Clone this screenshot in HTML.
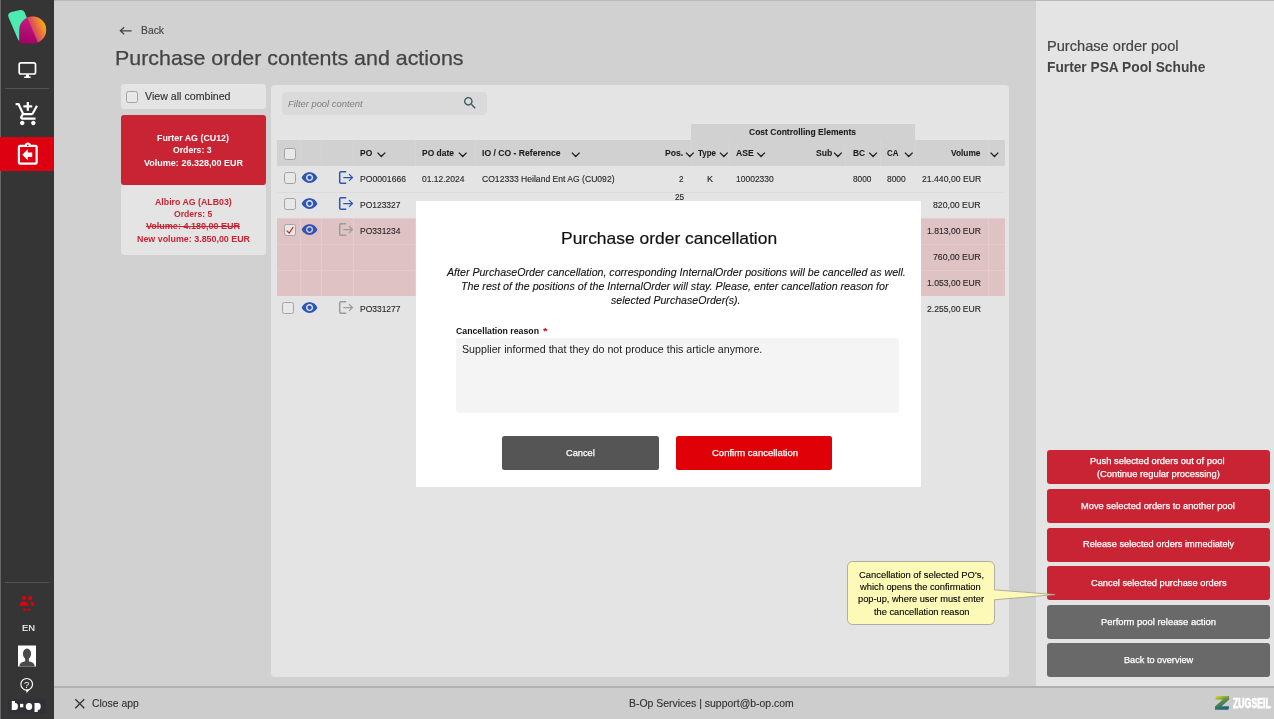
<!DOCTYPE html>
<html lang="en">
<head>
<meta charset="utf-8">
<title>Purchase order contents and actions</title>
<style>
*{box-sizing:border-box;margin:0;padding:0}
html,body{width:1274px;height:719px;overflow:hidden}
body{position:relative;background:#d1d1d1;font-family:"Liberation Sans",sans-serif;color:#444;font-size:11px}
.a{position:absolute}
.t{position:absolute;white-space:nowrap;line-height:1;transform-origin:0 50%;font-family:"Liberation Sans",sans-serif}
svg{position:absolute;overflow:visible}
#side{left:0;top:0;width:54px;height:719px;background:#353535;will-change:transform}
#edge{left:0;top:0;width:1px;height:719px;background:#666}
.sep{left:5px;width:44px;height:1px;background:#525252}
#act{left:0;top:137px;width:54px;height:34px;background:#dc0010}
#topline{left:54px;top:0;width:1220px;height:1px;background:#b4bac1}
#botline{left:54px;top:686px;width:1220px;height:2px;background:#adb2b7}
#botbar{left:54px;top:688px;width:1220px;height:31px;background:#cdcdcd}
#right{left:1036px;top:1px;width:238px;height:685px;background:#e4e4e4}
.rb{left:1047px;width:223px;height:34px;border-radius:3px}
.red{background:#c92434}
.gry{background:#696969}
#panel{left:271px;top:85px;width:738px;height:592px;background:#e4e4e4;border-radius:4px}
#vac{left:121px;top:84px;width:145px;height:25px;background:#e4e4e4;border-radius:3px}
.cb{width:12px;height:12px;border:1px solid #a3a3a3;border-radius:2.5px;background:#e8e8e8}
#card1{left:121px;top:115px;width:145px;height:70px;background:#c92434;border-radius:3px}
#card2{left:121px;top:185px;width:145px;height:70px;background:#e4e4e4;border-radius:3px}
#filter{left:282px;top:92px;width:205px;height:23px;background:#dadada;border-radius:4px}
#thead{left:277px;top:140px;width:728px;height:26px;background:#d1d1d1}
#cce{left:690.5px;top:124px;width:224.5px;height:17px;background:#d1d1d1}
.hl{left:277px;width:728px;height:1px;background:#dcdcdc}
.pink{left:277px;width:728px;background:#dfc2c4}
.pl{background:#e4cccd}
.vs{width:1px;background:#d5d5d5;top:140px;height:26px}
.pv{width:1px;background:#e4cccd;top:218.5px;height:77.5px}
#modal{left:416px;top:201.3px;width:505px;height:285.4px;background:#fff}
#ta{left:456px;top:337.5px;width:443px;height:75px;background:#f4f4f4;border-radius:3px}
.mb{top:436px;height:33.7px;border-radius:2.5px}
#tip{left:847.3px;top:561px;width:147.3px;height:63.6px;background:#fdfab8;border:1px solid #aeada0;border-radius:5.5px}
</style>
</head>
<body>
<div class="a" id="topline"></div>

<!-- sidebar -->
<div class="a" id="side">
  <div class="a" id="edge"></div>
  <div class="a sep" style="top:88px"></div>
  <div class="a sep" style="top:582px"></div>
  <div class="a" id="act"></div>
  <div class="a" style="left:7.8px;top:699.4px;width:38px;height:14.3px;background:#303036"></div>
  <svg width="54" height="719" viewBox="0 0 54 719" style="left:0;top:0">
    <defs>
      <linearGradient id="gm" gradientUnits="userSpaceOnUse" x1="30" y1="18" x2="22" y2="43"><stop offset="0" stop-color="#c41c7d"/><stop offset="1" stop-color="#a10068"/></linearGradient>
      <linearGradient id="go" gradientUnits="userSpaceOnUse" x1="30.5" y1="31" x2="46" y2="24.5"><stop offset="0" stop-color="#cf2f76"/><stop offset="1" stop-color="#ffb508"/></linearGradient>
      <clipPath id="cb"><path d="M19.2 30A13.5 13.5 0 1 1 32.7 43.5H22.2A3 3 0 0 1 19.2 40.5Z"/></clipPath>
    </defs>
    <!-- logo -->
    <path d="M12.300 16L21 14L29 34L21.500 37.500Z" fill="#4debb0" stroke="#4debb0" stroke-width="8" stroke-linejoin="round"/>
    <g clip-path="url(#cb)">
      <rect x="15" y="12" width="36" height="36" fill="url(#gm)"/>
      <path d="M26.2 15.4L38.3 43.6L52 46L52 8Z" fill="url(#go)"/>
    </g>
    <!-- monitor -->
    <rect x="19.2" y="62.8" width="16.3" height="11.2" rx="1.7" fill="none" stroke="#fff" stroke-width="1.7"/>
    <path d="M26 74.6h3v1.8h1.7v1.6h-6.5v-1.6h1.8z" fill="#fff"/>
    <!-- cart -->
    <g transform="translate(14.5 100.8) scale(1.108)" fill="#fff"><path d="M11 9h2V6h3V4h-3V1h-2v3H8v2h3v3zm-4 9c-1.1 0-1.99.9-1.99 2S5.900 22 7 22s2-.9 2-2-.9-2-2-2zm10 0c-1.1 0-1.99.9-1.99 2s.89 2 1.990 2 2-.9 2-2-.9-2-2-2zm-9.830-3.250l.03-.12.9-1.63h7.450c.75 0 1.410-.41 1.750-1.030l3.860-7.010L19.420 4h-.01l-1.100 2-2.760 5H8.530l-.13-.27L6.160 6l-.95-2-.94-2H1v2h2l3.600 7.590-1.350 2.450c-.16.28-.25.61-.25.96 0 1.100.9 2 2 2h12v-2H7.420c-.13 0-.25-.11-.25-.25z"/></g>
    <!-- clipboard return -->
    <g transform="translate(14.5 141.5) scale(1.108)" fill="#fff"><path fill-rule="evenodd" d="M16 10h-4V7l-5 5 5 5v-3h4zM19 3h-4.180C14.400 1.840 13.300 1 12 1s-2.400.84-2.820 2H5c-1.100 0-2 .9-2 2v14c0 1.100.9 2 2 2h14c1.100 0 2-.9 2-2V5c0-1.100-.9-2-2-2zm-7-.25c.41 0 .75.34.75.75s-.34.750-.75.750-.75-.34-.75-.750.34-.75.75-.75zM19 19H5V5h14v14z"/></g>
    <!-- people switch -->
    <g fill="#e2000f">
      <circle cx="24.100" cy="598.100" r="2.150"/><circle cx="30.300" cy="598.100" r="2.150"/>
      <path d="M19.800 605.800v-1.200c0-2.100 2.900-3.100 4.350-3.100s4.350 1 4.350 3.100v1.200z"/>
      <path d="M29.700 601.600c.9.600 1.500 1.600 1.500 2.900v1.300h3.200v-1.200c0-2-2.500-3-4.700-3z"/>
      <path d="M22.600 609.700l2.300-1.800v1.300h4.200v-1.300l2.300 1.800-2.300 1.800v-1.300h-4.200v1.300z"/>
    </g>
    <!-- avatar -->
    <rect x="18" y="645.500" width="18" height="21" fill="#fff"/>
    <g fill="#4a4a4a"><ellipse cx="27" cy="653.700" rx="4.100" ry="5.200"/><rect x="25.100" y="657" width="3.800" height="5"/><path d="M19.400 666.500c0-3.300 2-4.300 5.700-5.300h3.800c3.700 1 5.700 2 5.700 5.300z"/></g>
    <!-- b-op wordmark -->
    <text x="12.300" y="708.900" font-family="Liberation Sans, sans-serif" font-size="8.200" font-weight="bold" letter-spacing="3.300" fill="#fff" stroke="#fff" stroke-width="2" stroke-linejoin="miter">b·op</text>
    <!-- help -->
    <circle cx="26.700" cy="684.300" r="5.800" fill="none" stroke="#fff" stroke-width="1.150"/>
    <path d="M25.900 689.900l.8 3.100 3.300-3.900z" fill="#fff"/>
    <text x="26.700" y="687.700" font-family="Liberation Sans, sans-serif" font-size="9.500" fill="#fff" text-anchor="middle">?</text>
  </svg>
</div>

<!-- heading icons -->
<svg width="20" height="12" viewBox="118 25 20 12" style="left:118px;top:25px"><path d="M120.300 30.800H131.600M124.200 27.200L120.400 30.800L124.200 34.400" fill="none" stroke="#444" stroke-width="1.300"/></svg>

<!-- left column -->
<div class="a" id="vac"><div class="a cb" style="left:5px;top:6.5px"></div></div>
<div class="a" id="card1"></div>
<div class="a" id="card2"></div>

<!-- main panel -->
<div class="a" id="panel"></div>
<div class="a" id="filter"></div>
<svg width="16" height="16" viewBox="0 0 24 24" style="left:462.100px;top:95.300px"><path fill="#3d5560" d="M15.500 14h-.79l-.28-.27C15.410 12.590 16 11.110 16 9.500 16 5.910 13.090 3 9.500 3S3 5.910 3 9.500 5.910 16 9.500 16c1.610 0 3.090-.59 4.230-1.570l.27.280v.79l5 4.990L20.490 19l-4.990-5zm-6 0C7.010 14 5 11.990 5 9.500S7.010 5 9.500 5 14 7.010 14 9.500 11.990 14 9.500 14z"/></svg>

<div class="a" id="cce"></div>
<div class="a" id="thead"></div>
<div class="a vs" style="left:300.0px"></div>
<div class="a vs" style="left:321.0px"></div>
<div class="a vs" style="left:352.5px"></div>
<div class="a vs" style="left:414.5px"></div>
<div class="a vs" style="left:474.5px"></div>
<div class="a vs" style="left:690.5px"></div>
<div class="a vs" style="left:729.0px"></div>
<div class="a vs" style="left:845.2px"></div>
<div class="a vs" style="left:879.5px"></div>
<div class="a vs" style="left:914.8px"></div>
<div class="a vs" style="left:988.2px"></div>
<div class="a hl" style="top:191.700px"></div>
<div class="a pink" style="top:218.300px;height:77.700px"></div>
<div class="a hl pl" style="top:218.300px"></div>
<div class="a hl pl" style="top:244px"></div>
<div class="a hl pl" style="top:270px"></div>
<div class="a pv" style="left:300.0px"></div>
<div class="a pv" style="left:321.0px"></div>
<div class="a pv" style="left:352.5px"></div>
<div class="a pv" style="left:414.5px"></div>
<div class="a pv" style="left:474.5px"></div>
<div class="a pv" style="left:690.5px"></div>
<div class="a pv" style="left:729.0px"></div>
<div class="a pv" style="left:845.2px"></div>
<div class="a pv" style="left:879.5px"></div>
<div class="a pv" style="left:914.8px"></div>
<div class="a pv" style="left:988.2px"></div>
<div class="a cb" style="left:284px;top:148px"></div>
<svg width="740" height="10" viewBox="270 150 740 10" style="left:270px;top:150px"><path d="M377.5 152.600l3.850 3.900 3.850-3.900M458.9 152.600l3.850 3.900 3.850-3.900M571.9 152.600l3.850 3.900 3.850-3.900M686.0 152.600l3.850 3.900 3.850-3.900M720.0 152.600l3.850 3.900 3.850-3.900M757.2 152.600l3.850 3.900 3.850-3.900M834.0 152.600l3.850 3.900 3.850-3.900M869.2 152.600l3.850 3.900 3.850-3.900M904.9 152.600l3.850 3.900 3.850-3.900M990.6 152.600l3.850 3.900 3.850-3.900" fill="none" stroke="#222" stroke-width="1.350"/></svg>
<div class="a cb" style="left:284.0px;top:172.2px"></div>
<svg width="17.100" height="17.100" viewBox="0 0 24 24" style="left:300.800px;top:168.8px"><path fill="#2b55b8" d="M12 4.5C7 4.5 2.730 7.610 1 12c1.730 4.390 6 7.500 11 7.500s9.270-3.110 11-7.500c-1.730-4.390-6-7.500-11-7.500zM12 17c-2.760 0-5-2.240-5-5s2.240-5 5-5 5 2.240 5 5-2.240 5-5 5zm0-8c-1.660 0-3 1.340-3 3s1.340 3 3 3 3-1.340 3-3-1.340-3-3-3z"/></svg>
<svg width="16" height="14" viewBox="338 170 16 14" style="left:338px;top:170.0px"><path d="M346.200 171.800H340.800a1.100 1.100 0 0 0-1.100 1.100V182.100a1.100 1.100 0 0 0 1.100 1.100H346.200" fill="none" stroke="#2b55b8" stroke-width="1.500"/><path d="M343.300 177.500H352.400M349 174.100l3.500 3.400-3.500 3.400" fill="none" stroke="#2b55b8" stroke-width="1.250"/></svg>
<div class="a cb" style="left:284.0px;top:198.2px"></div>
<svg width="17.100" height="17.100" viewBox="0 0 24 24" style="left:300.800px;top:194.8px"><path fill="#2b55b8" d="M12 4.5C7 4.5 2.730 7.610 1 12c1.730 4.390 6 7.500 11 7.500s9.270-3.110 11-7.500c-1.730-4.390-6-7.500-11-7.500zM12 17c-2.760 0-5-2.240-5-5s2.240-5 5-5 5 2.240 5 5-2.240 5-5 5zm0-8c-1.660 0-3 1.340-3 3s1.340 3 3 3 3-1.340 3-3-1.340-3-3-3z"/></svg>
<svg width="16" height="14" viewBox="338 170 16 14" style="left:338px;top:196.0px"><path d="M346.200 171.800H340.800a1.100 1.100 0 0 0-1.100 1.100V182.100a1.100 1.100 0 0 0 1.100 1.100H346.200" fill="none" stroke="#2b55b8" stroke-width="1.500"/><path d="M343.300 177.500H352.400M349 174.100l3.500 3.400-3.500 3.400" fill="none" stroke="#2b55b8" stroke-width="1.250"/></svg>
<div class="a cb" style="left:284.0px;top:224.2px"></div>
<svg width="12" height="12" viewBox="0 0 12 12" style="left:284.0px;top:224.2px"><path d="M2.700 6.600L5.200 9L9.200 3.200" fill="none" stroke="#cc2233" stroke-width="1.150"/></svg>
<svg width="17.100" height="17.100" viewBox="0 0 24 24" style="left:300.800px;top:220.8px"><path fill="#2b55b8" d="M12 4.5C7 4.5 2.730 7.610 1 12c1.730 4.390 6 7.500 11 7.500s9.270-3.110 11-7.500c-1.730-4.390-6-7.500-11-7.500zM12 17c-2.760 0-5-2.240-5-5s2.240-5 5-5 5 2.240 5 5-2.240 5-5 5zm0-8c-1.660 0-3 1.340-3 3s1.340 3 3 3 3-1.340 3-3-1.340-3-3-3z"/></svg>
<svg width="16" height="14" viewBox="338 170 16 14" style="left:338px;top:222.0px"><path d="M346.200 171.800H340.800a1.100 1.100 0 0 0-1.100 1.100V182.100a1.100 1.100 0 0 0 1.100 1.100H346.200" fill="none" stroke="#9b9b9b" stroke-width="1.500"/><path d="M343.300 177.500H352.400M349 174.100l3.500 3.400-3.500 3.400" fill="none" stroke="#9b9b9b" stroke-width="1.250"/></svg>
<div class="a cb" style="left:282.0px;top:302.2px"></div>
<svg width="17.100" height="17.100" viewBox="0 0 24 24" style="left:300.800px;top:298.8px"><path fill="#2b55b8" d="M12 4.5C7 4.5 2.730 7.610 1 12c1.730 4.390 6 7.500 11 7.500s9.270-3.110 11-7.500c-1.730-4.390-6-7.500-11-7.500zM12 17c-2.760 0-5-2.240-5-5s2.240-5 5-5 5 2.240 5 5-2.240 5-5 5zm0-8c-1.660 0-3 1.340-3 3s1.340 3 3 3 3-1.340 3-3-1.340-3-3-3z"/></svg>
<svg width="16" height="14" viewBox="338 170 16 14" style="left:338px;top:300.0px"><path d="M346.200 171.800H340.800a1.100 1.100 0 0 0-1.100 1.100V182.100a1.100 1.100 0 0 0 1.100 1.100H346.200" fill="none" stroke="#9b9b9b" stroke-width="1.500"/><path d="M343.300 177.500H352.400M349 174.100l3.500 3.400-3.500 3.400" fill="none" stroke="#9b9b9b" stroke-width="1.250"/></svg>

<!-- modal -->
<div class="a" id="modal"></div>
<div class="a" id="ta"></div>
<div class="a mb" style="left:502px;width:157px;background:#555"></div>
<div class="a mb" style="left:675.800px;width:156px;background:#e00008"></div>

<!-- right panel -->
<div class="a" id="right"></div>
<div class="a rb red" style="top:450px"></div>
<div class="a rb red" style="top:488.700px"></div>
<div class="a rb red" style="top:527.500px"></div>
<div class="a rb red" style="top:566.100px"></div>
<div class="a rb gry" style="top:604.700px"></div>
<div class="a rb gry" style="top:643.300px"></div>

<!-- tooltip -->
<div class="a" id="tip"></div>
<svg width="70" height="14" viewBox="990 588 70 14" style="left:990px;top:588px"><path d="M994 589.800L1055 594.600L994 599.800Z" fill="#fdfab8"/><path d="M994.300 589.800L1055 594.600L994.300 599.800" fill="none" stroke="#a9a890" stroke-width=".9"/></svg>

<!-- bottom -->
<div class="a" id="botbar"></div>
<div class="a" id="botline"></div>
<svg width="12" height="12" viewBox="74 698 12 12" style="left:74px;top:698px"><path d="M75.300 699.300L84.300 708.300M84.300 699.300L75.300 708.300" fill="none" stroke="#333" stroke-width="1.300"/></svg>
<svg width="16" height="16" viewBox="1214 695 16 16" style="left:1214px;top:695px">
  <defs><linearGradient id="gz" x1="0" y1="0" x2="0.350" y2="1"><stop offset="0" stop-color="#e4e41c"/><stop offset=".4" stop-color="#6a9440"/><stop offset="1" stop-color="#1c6678"/></linearGradient></defs>
  <path d="M1216 696H1229.200V699.400L1221.600 706.200H1229.200L1228.400 709.700H1215V706.400L1222.700 699.600H1215.400Z" fill="url(#gz)"/>
</svg>

<div class="a" id="txt" style="left:0;top:0;width:1274px;height:719px;will-change:transform">
<div class="t" style="left:140.5px;top:24.62px;font-size:11.2px;color:#444;transform:scaleX(0.9246);-webkit-text-stroke:0.15px #444">Back</div>
<div class="t" style="left:115.2px;top:47.83px;font-size:20.4px;color:#444;transform:scaleX(1.0495);-webkit-text-stroke:0.25px #444">Purchase order contents and actions</div>
<div class="t" style="left:144.5px;top:90.57px;font-size:10.9px;color:#333;transform:scaleX(0.9765);-webkit-text-stroke:0.15px #333">View all combined</div>
<div class="t" style="left:157.0px;top:132.90px;font-size:9.8px;color:#fff;transform:scaleX(0.9039);font-weight:bold">Furter AG (CU12)</div>
<div class="t" style="left:173.0px;top:145.20px;font-size:9.8px;color:#fff;transform:scaleX(0.8838);font-weight:bold">Orders: 3</div>
<div class="t" style="left:143.7px;top:157.70px;font-size:9.8px;color:#fff;transform:scaleX(0.9197);font-weight:bold">Volume: 26.328,00 EUR</div>
<div class="t" style="left:155.0px;top:196.50px;font-size:9.8px;color:#c92434;transform:scaleX(0.8963);font-weight:bold">Albiro AG (ALB03)</div>
<div class="t" style="left:174.0px;top:208.80px;font-size:9.8px;color:#c92434;transform:scaleX(0.8783);font-weight:bold">Orders: 5</div>
<div class="t" style="left:146.2px;top:221.40px;font-size:9.8px;color:#c92434;transform:scaleX(0.9199);font-weight:bold;text-decoration:line-through;text-decoration-thickness:.8px">Volume: 4.180,00 EUR</div>
<div class="t" style="left:137.0px;top:233.70px;font-size:9.8px;color:#c92434;transform:scaleX(0.9062);font-weight:bold">New volume: 3.850,00 EUR</div>
<div class="t" style="left:288.0px;top:99.37px;font-size:9.6px;color:#7d7d7d;transform:scaleX(0.9771);font-style:italic">Filter pool content</div>
<div class="t" style="left:748.7px;top:127.96px;font-size:8.55px;color:#1c1c1c;transform:scaleX(0.9969);font-weight:bold;-webkit-text-stroke:0.08px #1c1c1c">Cost Controlling Elements</div>
<div class="t" style="left:359.5px;top:148.76px;font-size:8.55px;color:#1c1c1c;transform:scaleX(0.9920);font-weight:bold;-webkit-text-stroke:0.08px #1c1c1c">PO</div>
<div class="t" style="left:421.5px;top:148.76px;font-size:8.55px;color:#1c1c1c;transform:scaleX(0.9897);font-weight:bold;-webkit-text-stroke:0.08px #1c1c1c">PO date</div>
<div class="t" style="left:481.8px;top:148.76px;font-size:8.55px;color:#1c1c1c;transform:scaleX(1.0079);font-weight:bold;-webkit-text-stroke:0.08px #1c1c1c">IO / CO - Reference</div>
<div class="t" style="left:665.2px;top:148.76px;font-size:8.55px;color:#1c1c1c;transform:scaleX(1.0109);font-weight:bold;-webkit-text-stroke:0.08px #1c1c1c">Pos.</div>
<div class="t" style="left:697.7px;top:148.76px;font-size:8.55px;color:#1c1c1c;transform:scaleX(0.9303);font-weight:bold;-webkit-text-stroke:0.08px #1c1c1c">Type</div>
<div class="t" style="left:736.0px;top:148.76px;font-size:8.55px;color:#1c1c1c;transform:scaleX(1.0115);font-weight:bold;-webkit-text-stroke:0.08px #1c1c1c">ASE</div>
<div class="t" style="left:815.7px;top:148.76px;font-size:8.55px;color:#1c1c1c;transform:scaleX(1.0064);font-weight:bold;-webkit-text-stroke:0.08px #1c1c1c">Sub</div>
<div class="t" style="left:852.5px;top:148.76px;font-size:8.55px;color:#1c1c1c;transform:scaleX(0.9742);font-weight:bold;-webkit-text-stroke:0.08px #1c1c1c">BC</div>
<div class="t" style="left:886.5px;top:148.76px;font-size:8.55px;color:#1c1c1c;transform:scaleX(0.9288);font-weight:bold;-webkit-text-stroke:0.08px #1c1c1c">CA</div>
<div class="t" style="left:950.8px;top:148.76px;font-size:8.55px;color:#1c1c1c;transform:scaleX(0.9745);font-weight:bold;-webkit-text-stroke:0.08px #1c1c1c">Volume</div>
<div class="t" style="left:359.5px;top:174.76px;font-size:8.55px;color:#262626;transform:scaleX(1.0087);-webkit-text-stroke:0.12px #262626">PO0001666</div>
<div class="t" style="left:421.5px;top:174.76px;font-size:8.55px;color:#262626;transform:scaleX(0.9934);-webkit-text-stroke:0.12px #262626">01.12.2024</div>
<div class="t" style="left:481.8px;top:174.76px;font-size:8.55px;color:#262626;transform:scaleX(1.0033);-webkit-text-stroke:0.12px #262626">CO12333 Heiland Ent AG (CU092)</div>
<div class="t" style="left:679.0px;top:174.76px;font-size:8.55px;color:#262626;transform:scaleX(0.9443);-webkit-text-stroke:0.12px #262626">2</div>
<div class="t" style="left:706.5px;top:174.76px;font-size:8.55px;color:#262626;transform:scaleX(1.0521);-webkit-text-stroke:0.12px #262626">K</div>
<div class="t" style="left:736.2px;top:174.76px;font-size:8.55px;color:#262626;transform:scaleX(0.9934);-webkit-text-stroke:0.12px #262626">10002330</div>
<div class="t" style="left:852.5px;top:174.76px;font-size:8.55px;color:#262626;transform:scaleX(0.9718);-webkit-text-stroke:0.12px #262626">8000</div>
<div class="t" style="left:886.5px;top:174.76px;font-size:8.55px;color:#262626;transform:scaleX(0.9855);-webkit-text-stroke:0.12px #262626">8000</div>
<div class="t" style="left:921.5px;top:174.76px;font-size:8.55px;color:#262626;transform:scaleX(1.0138);-webkit-text-stroke:0.12px #262626">21.440,00 EUR</div>
<div class="t" style="left:359.5px;top:200.76px;font-size:8.55px;color:#262626;transform:scaleX(0.9908);-webkit-text-stroke:0.12px #262626">PO123327</div>
<div class="t" style="left:674.8px;top:192.96px;font-size:8.55px;color:#262626;transform:scaleX(0.9710);-webkit-text-stroke:0.12px #262626">25</div>
<div class="t" style="left:933.2px;top:200.76px;font-size:8.55px;color:#262626;transform:scaleX(1.0210);-webkit-text-stroke:0.12px #262626">820,00 EUR</div>
<div class="t" style="left:359.5px;top:226.76px;font-size:8.55px;color:#262626;transform:scaleX(0.9908);-webkit-text-stroke:0.12px #262626">PO331234</div>
<div class="t" style="left:926.7px;top:226.76px;font-size:8.55px;color:#262626;transform:scaleX(1.0059);-webkit-text-stroke:0.12px #262626">1.813,00 EUR</div>
<div class="t" style="left:933.2px;top:253.06px;font-size:8.55px;color:#262626;transform:scaleX(1.0210);-webkit-text-stroke:0.12px #262626">760,00 EUR</div>
<div class="t" style="left:926.7px;top:278.96px;font-size:8.55px;color:#262626;transform:scaleX(1.0059);-webkit-text-stroke:0.12px #262626">1.053,00 EUR</div>
<div class="t" style="left:359.5px;top:304.86px;font-size:8.55px;color:#262626;transform:scaleX(0.9908);-webkit-text-stroke:0.12px #262626">PO331277</div>
<div class="t" style="left:926.7px;top:304.86px;font-size:8.55px;color:#262626;transform:scaleX(1.0059);-webkit-text-stroke:0.12px #262626">2.255,00 EUR</div>
<div class="t" style="left:561.2px;top:229.61px;font-size:17.35px;color:#111;transform:scaleX(1.0052);-webkit-text-stroke:0.2px #111">Purchase order cancellation</div>
<div class="t" style="left:447.1px;top:266.90px;font-size:10.63px;color:#111;transform:scaleX(0.9997);font-style:italic;-webkit-text-stroke:0.1px #111">After PurchaseOrder cancellation, corresponding InternalOrder positions will be cancelled as well.</div>
<div class="t" style="left:461.4px;top:280.90px;font-size:10.63px;color:#111;transform:scaleX(1.0031);font-style:italic;-webkit-text-stroke:0.1px #111">The rest of the positions of the InternalOrder will stay. Please, enter cancellation reason for</div>
<div class="t" style="left:611.0px;top:294.80px;font-size:10.63px;color:#111;transform:scaleX(0.9971);font-style:italic;-webkit-text-stroke:0.1px #111">selected PurchaseOrder(s).</div>
<div class="t" style="left:456.0px;top:326.78px;font-size:9.0px;color:#111;transform:scaleX(0.9706);font-weight:bold">Cancellation reason</div>
<div class="t" style="left:542.8px;top:326.78px;font-size:9.0px;color:#d0021b;transform:scaleX(1.2857);font-weight:bold">*</div>
<div class="t" style="left:462.0px;top:344.18px;font-size:10.65px;color:#222;transform:scaleX(1.0034)">Supplier informed that they do not produce this article anymore.</div>
<div class="t" style="left:565.7px;top:447.79px;font-size:9.7px;color:#fff;transform:scaleX(0.9537);-webkit-text-stroke:0.25px #fff">Cancel</div>
<div class="t" style="left:711.5px;top:447.79px;font-size:9.7px;color:#fff;transform:scaleX(0.9799);-webkit-text-stroke:0.25px #fff">Confirm cancellation</div>
<div class="t" style="left:1046.7px;top:38.88px;font-size:14.2px;color:#444;transform:scaleX(1.0300);-webkit-text-stroke:0.2px #444">Purchase order pool</div>
<div class="t" style="left:1046.7px;top:59.68px;font-size:14.2px;color:#444;transform:scaleX(0.9686);font-weight:bold">Furter PSA Pool Schuhe</div>
<div class="t" style="left:1090.0px;top:455.77px;font-size:9.6px;color:#fff;transform:scaleX(0.9775);-webkit-text-stroke:0.25px #fff">Push selected orders out of pool</div>
<div class="t" style="left:1097.0px;top:468.57px;font-size:9.6px;color:#fff;transform:scaleX(0.9713);-webkit-text-stroke:0.25px #fff">(Continue regular processing)</div>
<div class="t" style="left:1081.2px;top:500.77px;font-size:9.6px;color:#fff;transform:scaleX(0.9708);-webkit-text-stroke:0.25px #fff">Move selected orders to another pool</div>
<div class="t" style="left:1082.8px;top:538.97px;font-size:9.6px;color:#fff;transform:scaleX(0.9613);-webkit-text-stroke:0.25px #fff">Release selected orders immediately</div>
<div class="t" style="left:1090.7px;top:577.57px;font-size:9.6px;color:#fff;transform:scaleX(0.9662);-webkit-text-stroke:0.25px #fff">Cancel selected purchase orders</div>
<div class="t" style="left:1101.0px;top:616.57px;font-size:9.6px;color:#fff;transform:scaleX(0.9802);-webkit-text-stroke:0.25px #fff">Perform pool release action</div>
<div class="t" style="left:1123.8px;top:654.77px;font-size:9.6px;color:#fff;transform:scaleX(0.9548);-webkit-text-stroke:0.25px #fff">Back to overview</div>
<div class="t" style="left:859.0px;top:569.63px;font-size:9.65px;color:#000;transform:scaleX(0.9760);-webkit-text-stroke:0.12px #000">Cancellation of selected PO's,</div>
<div class="t" style="left:860.2px;top:581.73px;font-size:9.65px;color:#000;transform:scaleX(0.9685);-webkit-text-stroke:0.12px #000">which opens the confirmation</div>
<div class="t" style="left:857.8px;top:593.83px;font-size:9.65px;color:#000;transform:scaleX(0.9610);-webkit-text-stroke:0.12px #000">pop-up, where user must enter</div>
<div class="t" style="left:873.5px;top:606.83px;font-size:9.65px;color:#000;transform:scaleX(0.9644);-webkit-text-stroke:0.12px #000">the cancellation reason</div>
<div class="t" style="left:91.5px;top:697.62px;font-size:11.2px;color:#333;transform:scaleX(0.9280);-webkit-text-stroke:0.15px #333">Close app</div>
<div class="t" style="left:628.5px;top:697.62px;font-size:11.2px;color:#333;transform:scaleX(0.9332);-webkit-text-stroke:0.15px #333">B-Op Services | support@b-op.com</div>
<div class="t" style="left:1233.2px;top:695.88px;font-size:14.2px;color:#fff;transform:scaleX(0.6141);font-weight:bold;-webkit-text-stroke:0.75px #fff">ZUGSEIL</div>
<div class="t" style="left:21.5px;top:622.79px;font-size:9.7px;color:#fff;transform:scaleX(0.9667);-webkit-text-stroke:0.1px #fff">EN</div>
</div>
</body>
</html>
